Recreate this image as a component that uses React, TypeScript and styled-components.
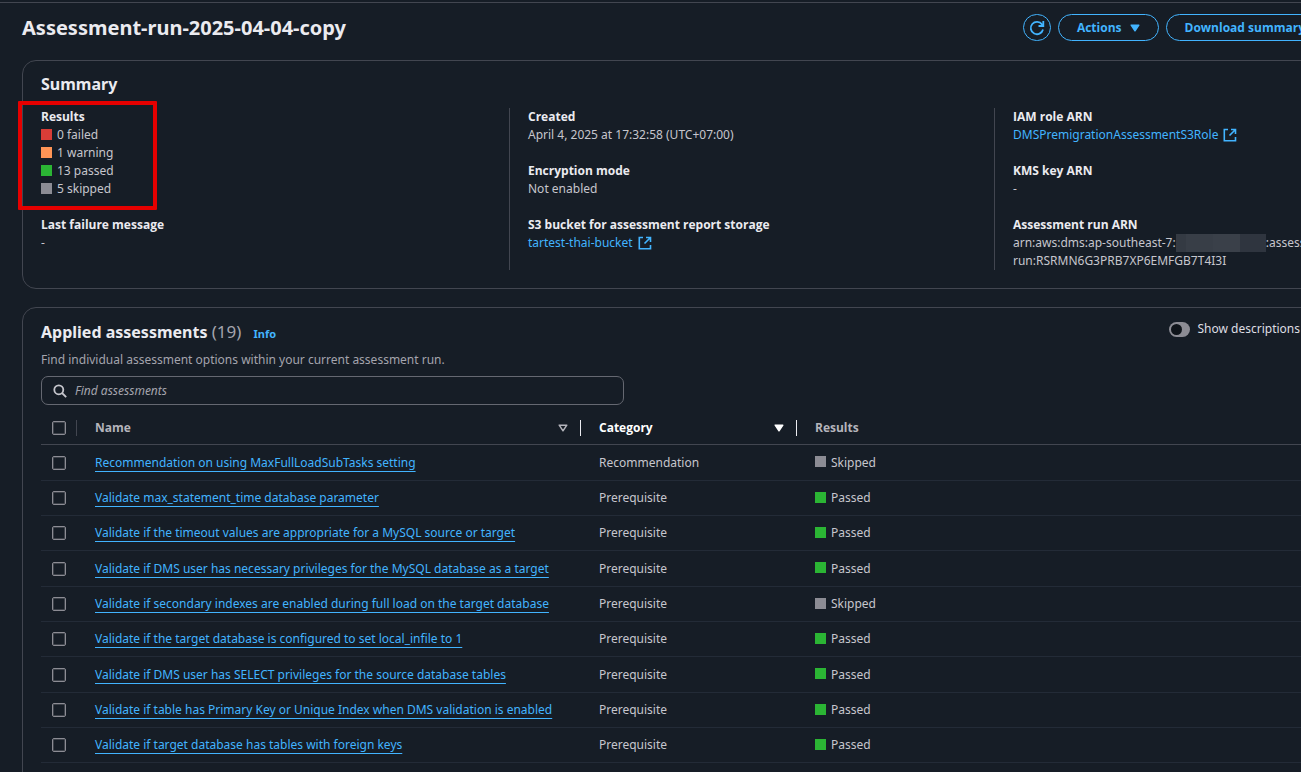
import React from "react";
import styled, { createGlobalStyle } from "styled-components";

const color = {
  page: "#161d26",
  divider: "#424650",
  rowDivider: "#232b37",
  heading: "#ebebf0",
  body: "#c6c6cd",
  muted: "#a4a4ad",
  control: "#8c8c94",
  link: "#42b4ff",
};

const statusColor = {
  failed: "#d93d37",
  warning: "#ff9556",
  passed: "#2bb534",
  skipped: "#8c8c94",
};

type Status = keyof typeof statusColor;

const GlobalStyle = createGlobalStyle`
  *, *::before, *::after { box-sizing: border-box; }
  body {
    margin: 0;
    background: ${color.page};
    color: ${color.body};
    font-family: "Noto Sans", "Open Sans", sans-serif;
    font-size: 12px;
    line-height: 18px;
  }
  h1, h2, p, dl, dt, dd { margin: 0; }
  button, input { font: inherit; }
`;

const Shell = styled.div`
  height: 100vh;
  overflow: hidden;
  padding-top: 2px;
`;

const Main = styled.main`
  min-width: 1498px;
  border-top: 1px solid ${color.divider};
  padding: 11px 0 0 22px;
`;

const PageHeader = styled.header`
  display: flex;
  align-items: center;
  justify-content: space-between;
  padding-right: 174px;
  margin-bottom: 19px;
`;

const PageTitle = styled.h1`
  color: ${color.heading};
  font-size: 20px;
  line-height: 27px;
  font-weight: 700;
`;

const Actions = styled.div`
  display: flex;
  gap: 7px;
`;

const Button = styled.button<{ $round?: boolean }>`
  display: inline-flex;
  align-items: center;
  justify-content: center;
  gap: 8px;
  height: 27px;
  width: ${(p) => (p.$round ? "28px" : "auto")};
  padding: 0 ${(p) => (p.$round ? "0" : "18px")};
  border: 1px solid ${color.link};
  border-radius: 14px;
  background: none;
  color: ${color.link};
  font-family: "Open Sans", sans-serif;
  font-weight: 700;
  white-space: nowrap;
`;

const Card = styled.section<{ $tall?: boolean }>`
  border: 1px solid ${color.divider};
  border-radius: 14px;
  padding: 12px 18px 18px;
  margin-bottom: 18px;
  min-height: ${(p) => (p.$tall ? "100vh" : "0")};
`;

const CardTitle = styled.h2`
  color: ${color.heading};
  font-size: 16px;
  line-height: 23px;
  font-weight: 700;
`;

const Count = styled.span`
  color: ${color.muted};
  font-size: 17px;
  font-weight: 400;
`;

const InfoLink = styled.a`
  color: ${color.link};
  font-size: 11px;
  line-height: 11px;
  font-weight: 700;
  text-decoration: none;
  margin-left: 8px;
`;

const SummaryGrid = styled.div`
  display: grid;
  grid-template-columns: 468fr 485fr 485fr;
  margin-top: 12px;
`;

const SummaryColumn = styled.dl`
  & + & {
    border-left: 1px solid ${color.divider};
    padding-left: 18px;
  }
`;

const Field = styled.div`
  position: relative;
  padding-bottom: 18px;
`;

const FieldLabel = styled.dt`
  color: ${color.heading};
  font-family: "Open Sans", sans-serif;
  font-weight: 700;
`;

const StatusLine = styled.span`
  display: flex;
  align-items: center;
  gap: 5px;
`;

const Swatch = styled.span<{ $status: Status }>`
  width: 11px;
  height: 11px;
  margin-bottom: 2px;
  background: ${(p) => statusColor[p.$status]};
`;

const Highlight = styled.span`
  position: absolute;
  top: -7px;
  left: -23px;
  width: 139px;
  height: 109px;
  border: 4px solid #e60000;
  border-radius: 1px;
  pointer-events: none;
`;

const Link = styled.a`
  display: inline-flex;
  align-items: center;
  gap: 5px;
  color: ${color.link};
  text-decoration: none;
`;

const Arn = styled.span`
  white-space: nowrap;
`;

const Redacted = styled.span`
  display: inline-block;
  width: 90px;
  height: 18px;
  vertical-align: top;
  background: linear-gradient(
    90deg,
    #343a43 0 10px,
    #383e47 10px 37px,
    #3a4049 37px 64px,
    #2f353f 64px
  );
`;

const CardHeader = styled.div`
  display: flex;
  align-items: flex-start;
  justify-content: space-between;
  padding-right: 179px;
`;

const Description = styled.p`
  margin-top: 7px;
  color: ${color.muted};
`;

const ToggleLabel = styled.label`
  display: flex;
  align-items: center;
  gap: 7px;
  color: #dedee3;
  white-space: nowrap;
`;

const Toggle = styled.input`
  appearance: none;
  display: flex;
  align-items: center;
  width: 21px;
  height: 15px;
  margin: 0;
  padding: 0 2px;
  border-radius: 8px;
  background: ${color.control};

  &::before {
    content: "";
    width: 11px;
    height: 11px;
    border-radius: 50%;
    background: #0f141a;
  }
`;

const SearchBox = styled.label`
  display: flex;
  align-items: center;
  gap: 8px;
  width: 583px;
  height: 29px;
  margin-top: 7px;
  padding: 0 11px;
  border: 1px solid #656871;
  border-radius: 7px;
  color: ${color.body};
`;

const SearchInput = styled.input`
  flex: 1;
  padding: 0;
  border: 0;
  outline: 0;
  background: none;
  color: ${color.body};

  &::placeholder {
    color: ${color.muted};
    font-style: italic;
    opacity: 1;
  }
`;

const Table = styled.table`
  width: 100%;
  margin-top: 6px;
  table-layout: fixed;
  border-collapse: separate;
  border-spacing: 0;
`;

const HeadCell = styled.th<{ $active?: boolean; $rule?: string }>`
  height: 34px;
  padding: 0;
  border-bottom: 1px solid ${color.divider};
  color: ${(p) => (p.$active ? "#ffffff" : "#b4b4bb")};
  font-family: "Open Sans", sans-serif;
  text-align: left;
  font-weight: 700;

  & > div {
    display: flex;
    align-items: center;
    height: 16px;
    padding-left: 18px;
    border-right: 1px solid ${(p) => p.$rule ?? "transparent"};
  }
  &:first-child > div {
    padding-left: 11px;
  }
`;

const SortButton = styled.button`
  display: flex;
  flex: 1;
  align-items: center;
  justify-content: space-between;
  padding: 0 12px 0 0;
  border: 0;
  background: none;
  color: inherit;
  font-weight: 700;
`;

const Row = styled.tr`
  height: 35px;

  &:nth-child(3n + 1) {
    height: 36px;
  }
`;

const Cell = styled.td`
  padding: 0 0 0 18px;
  border-bottom: 1px solid ${color.rowDivider};
  white-space: nowrap;

  &:first-child {
    padding-left: 11px;
  }
`;

const Checkbox = styled.input`
  appearance: none;
  display: block;
  width: 14px;
  height: 14px;
  margin: 0;
  border: 1px solid ${color.control};
  border-radius: 2px;
  box-shadow: inset 0 0 0 1px #8c8c9455;
`;

const NameLink = styled.a`
  color: ${color.link};
  text-decoration: underline;
  text-decoration-thickness: 1px;
  text-underline-offset: 4px;
  text-decoration-skip-ink: none;
`;

const RefreshIcon = () => (
  <svg width="16" height="16" viewBox="0 0 16 16" fill="none" stroke="currentColor" strokeWidth="1.8" aria-hidden="true">
    <path d="M14 9.5A6.200 6.200 0 1 1 13 4.400L14 6" />
    <path d="M14.300 1v5H9.500" />
  </svg>
);

const ExternalIcon = () => (
  <svg width="14" height="14" viewBox="0 0 14 14" fill="none" stroke="currentColor" strokeWidth="1.6" aria-hidden="true">
    <path d="M5 1.5H1.300v11.200h11.200V9" />
    <path d="M8 1.500h4.500V6M12.500 1.500L6.500 7.500" />
  </svg>
);

const SearchIcon = () => (
  <svg width="14" height="14" viewBox="0 0 14 14" fill="none" stroke="currentColor" strokeWidth="1.8" aria-hidden="true">
    <circle cx="5.800" cy="5.800" r="4.500" />
    <path d="M9 9l4.200 4.200" />
  </svg>
);

const Caret = ({ open }: { open?: boolean }) => (
  <svg width="10" height="8" viewBox="0 0 10 8" stroke="currentColor" strokeWidth="1.500" strokeLinejoin="round" fill={open ? "none" : "currentColor"} aria-hidden="true">
    <path d="M1.200 1.200h7.600L5 6.800z" />
  </svg>
);

const resultCounts: { status: Status; count: number }[] = [
  { status: "failed", count: 0 },
  { status: "warning", count: 1 },
  { status: "passed", count: 13 },
  { status: "skipped", count: 5 },
];

const assessments: { name: string; category: string; status: Status }[] = [
  { name: "Recommendation on using MaxFullLoadSubTasks setting", category: "Recommendation", status: "skipped" },
  { name: "Validate max_statement_time database parameter", category: "Prerequisite", status: "passed" },
  { name: "Validate if the timeout values are appropriate for a MySQL source or target", category: "Prerequisite", status: "passed" },
  { name: "Validate if DMS user has necessary privileges for the MySQL database as a target", category: "Prerequisite", status: "passed" },
  { name: "Validate if secondary indexes are enabled during full load on the target database", category: "Prerequisite", status: "skipped" },
  { name: "Validate if the target database is configured to set local_infile to 1", category: "Prerequisite", status: "passed" },
  { name: "Validate if DMS user has SELECT privileges for the source database tables", category: "Prerequisite", status: "passed" },
  { name: "Validate if table has Primary Key or Unique Index when DMS validation is enabled", category: "Prerequisite", status: "passed" },
  { name: "Validate if target database has tables with foreign keys", category: "Prerequisite", status: "passed" },
];

const resultText: Record<Status, string> = {
  failed: "Failed",
  warning: "Warning",
  passed: "Passed",
  skipped: "Skipped",
};

function Summary() {
  return (
    <Card>
      <CardTitle>Summary</CardTitle>
      <SummaryGrid>
        <SummaryColumn>
          <Field>
            <FieldLabel>Results</FieldLabel>
            {resultCounts.map(({ status, count }) => (
              <dd key={status}>
                <StatusLine>
                  <Swatch $status={status} />
                  {`${count} ${status}`}
                </StatusLine>
              </dd>
            ))}
            <Highlight />
          </Field>
          <Field>
            <FieldLabel>Last failure message</FieldLabel>
            <dd>-</dd>
          </Field>
        </SummaryColumn>
        <SummaryColumn>
          <Field>
            <FieldLabel>Created</FieldLabel>
            <dd>April 4, 2025 at 17:32:58 (UTC+07:00)</dd>
          </Field>
          <Field>
            <FieldLabel>Encryption mode</FieldLabel>
            <dd>Not enabled</dd>
          </Field>
          <Field>
            <FieldLabel>S3 bucket for assessment report storage</FieldLabel>
            <dd>
              <Link href="#bucket">
                tartest-thai-bucket <ExternalIcon />
              </Link>
            </dd>
          </Field>
        </SummaryColumn>
        <SummaryColumn>
          <Field>
            <FieldLabel>IAM role ARN</FieldLabel>
            <dd>
              <Link href="#role">
                DMSPremigrationAssessmentS3Role <ExternalIcon />
              </Link>
            </dd>
          </Field>
          <Field>
            <FieldLabel>KMS key ARN</FieldLabel>
            <dd>-</dd>
          </Field>
          <div>
            <FieldLabel>Assessment run ARN</FieldLabel>
            <dd>
              <Arn>
                arn:aws:dms:ap-southeast-7:
                <Redacted />
                :assess
                <br />
                run:RSRMN6G3PRB7XP6EMFGB7T4I3I
              </Arn>
            </dd>
          </div>
        </SummaryColumn>
      </SummaryGrid>
    </Card>
  );
}

function AssessmentTable() {
  return (
    <Table>
      <colgroup>
        <col width="36" />
        <col width="504" />
        <col width="216" />
        <col />
      </colgroup>
      <thead>
        <tr>
          <HeadCell $rule={color.divider}>
            <div>
              <Checkbox type="checkbox" aria-label="Select all assessments" />
            </div>
          </HeadCell>
          <HeadCell $rule={color.heading}>
            <div>
              <SortButton type="button">
                Name <Caret open />
              </SortButton>
            </div>
          </HeadCell>
          <HeadCell $active $rule={color.heading}>
            <div>
              <SortButton type="button">
                Category <Caret />
              </SortButton>
            </div>
          </HeadCell>
          <HeadCell>
            <div>Results</div>
          </HeadCell>
        </tr>
      </thead>
      <tbody>
        {assessments.map(({ name, category, status }) => (
          <Row key={name}>
            <Cell>
              <Checkbox type="checkbox" aria-label={name} />
            </Cell>
            <Cell>
              <NameLink href="#assessment">{name}</NameLink>
            </Cell>
            <Cell>{category}</Cell>
            <Cell>
              <StatusLine>
                <Swatch $status={status} />
                {resultText[status]}
              </StatusLine>
            </Cell>
          </Row>
        ))}
      </tbody>
    </Table>
  );
}

export default function App() {
  return (
    <Shell>
      <GlobalStyle />
      <Main>
        <PageHeader>
          <PageTitle>Assessment-run-2025-04-04-copy</PageTitle>
          <Actions>
            <Button type="button" $round aria-label="Refresh">
              <RefreshIcon />
            </Button>
            <Button type="button">
              Actions <Caret />
            </Button>
            <Button type="button">Download summary</Button>
          </Actions>
        </PageHeader>
        <Summary />
        <Card $tall>
          <CardHeader>
            <div>
              <CardTitle>
                Applied assessments <Count>(19)</Count> <InfoLink href="#info">Info</InfoLink>
              </CardTitle>
              <Description>Find individual assessment options within your current assessment run.</Description>
            </div>
            <ToggleLabel>
              <Toggle type="checkbox" role="switch" />
              Show descriptions
            </ToggleLabel>
          </CardHeader>
          <SearchBox>
            <SearchIcon />
            <SearchInput type="text" placeholder="Find assessments" aria-label="Find assessments" />
          </SearchBox>
          <AssessmentTable />
        </Card>
      </Main>
    </Shell>
  );
}
